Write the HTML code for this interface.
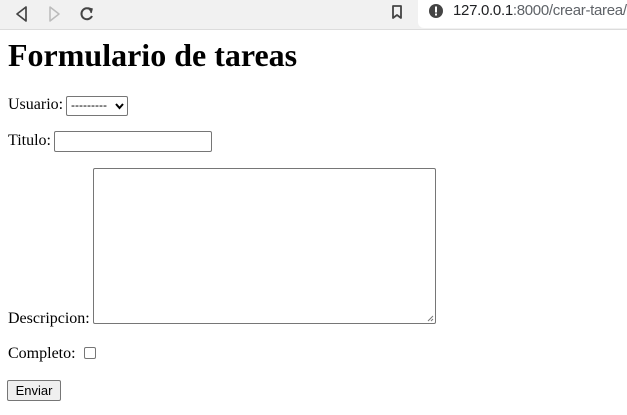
<!DOCTYPE html>
<html><head><style>
body{margin:0;width:627px;height:415px;overflow:hidden;background:#fff;font-family:"Liberation Serif",serif;font-size:16px;color:#000;position:relative}
.bar{position:absolute;left:0;top:0;width:627px;height:29px;background:#f1f1f1;border-bottom:1px solid #dcdcdc}
.addr{position:absolute;left:418px;top:0;width:209px;height:28px;background:#fff;border-radius:0 0 0 6px}
.url{position:absolute;left:453px;top:2px;font-family:"Liberation Sans",sans-serif;font-size:15px;color:#202124;letter-spacing:-0.3px}
.url span{color:#5f6368}
.a{position:absolute}
h1{position:absolute;left:8px;top:37px;margin:0;font-size:32px;font-weight:bold}
.box{position:absolute;border:1px solid #767676;background:#fff;box-sizing:border-box}
</style></head><body>
<div class="bar">
<svg class="a" style="left:12px;top:4px" width="100" height="20" viewBox="0 0 100 20">
<path d="M14 3 L5 10 L14 17 Z" fill="none" stroke="#444" stroke-width="1.7" stroke-linejoin="round"/>
<path d="M38 3 L47 10 L38 17 Z" fill="none" stroke="#bbb" stroke-width="1.5" stroke-linejoin="round"/>
<path d="M79 6 A5.5 5.5 0 1 0 80 12" fill="none" stroke="#444" stroke-width="2"/>
<path d="M76 4 L80 5 L79 9" fill="#444" stroke="#444" stroke-width="1.5"/>
</svg>
<svg class="a" style="left:391px;top:4px" width="12" height="16" viewBox="0 0 12 16"><path d="M2 2 H10 V14 L6 11 L2 14 Z" fill="none" stroke="#444" stroke-width="1.8" stroke-linejoin="round"/></svg>
</div>
<div class="addr"></div>
<svg class="a" style="left:428px;top:3px" width="16" height="16" viewBox="0 0 16 16"><circle cx="8" cy="8" r="7" fill="#444"/><rect x="7" y="3.5" width="2" height="6" fill="#fff"/><rect x="7" y="10.5" width="2" height="2" fill="#fff"/></svg>
<div class="url">127.0.0.1<span>:8000/crear-tarea/</span></div>
<h1>Formulario de tareas</h1>
<div class="a" style="left:8px;top:96px">Usuario:</div>
<div class="box" style="left:66px;top:96px;width:62px;height:20px;border-radius:2px;font-family:'Liberation Sans',sans-serif;font-size:12px;padding:1px 0 0 4px">---------<svg class="a" style="left:48px;top:6px" width="9" height="7" viewBox="0 0 9 7"><path d="M1 1 L4.5 5 L8 1" fill="none" stroke="#000" stroke-width="2"/></svg></div>
<div class="a" style="left:8px;top:132px">Titulo:</div>
<div class="box" style="left:54px;top:131px;width:158px;height:21px;border-radius:2px"></div>
<div class="box" style="left:93px;top:168px;width:343px;height:156px;border-radius:2px"><svg class="a" style="right:1px;bottom:1px" width="7" height="7"><path d="M1 6 L6 1 M4 6 L6 4" stroke="#777" stroke-width="1"/></svg></div>
<div class="a" style="left:8px;top:310px">Descripcion:</div>
<div class="a" style="left:8px;top:345px">Completo:</div>
<div class="box" style="left:84px;top:347px;width:12px;height:12px;border-radius:2px"></div>
<div class="box" style="left:7px;top:380px;width:54px;height:21px;background:#efefef;border-radius:2px;font-family:'Liberation Sans',sans-serif;font-size:13px;text-align:center;line-height:19px">Enviar</div>
</body></html>
